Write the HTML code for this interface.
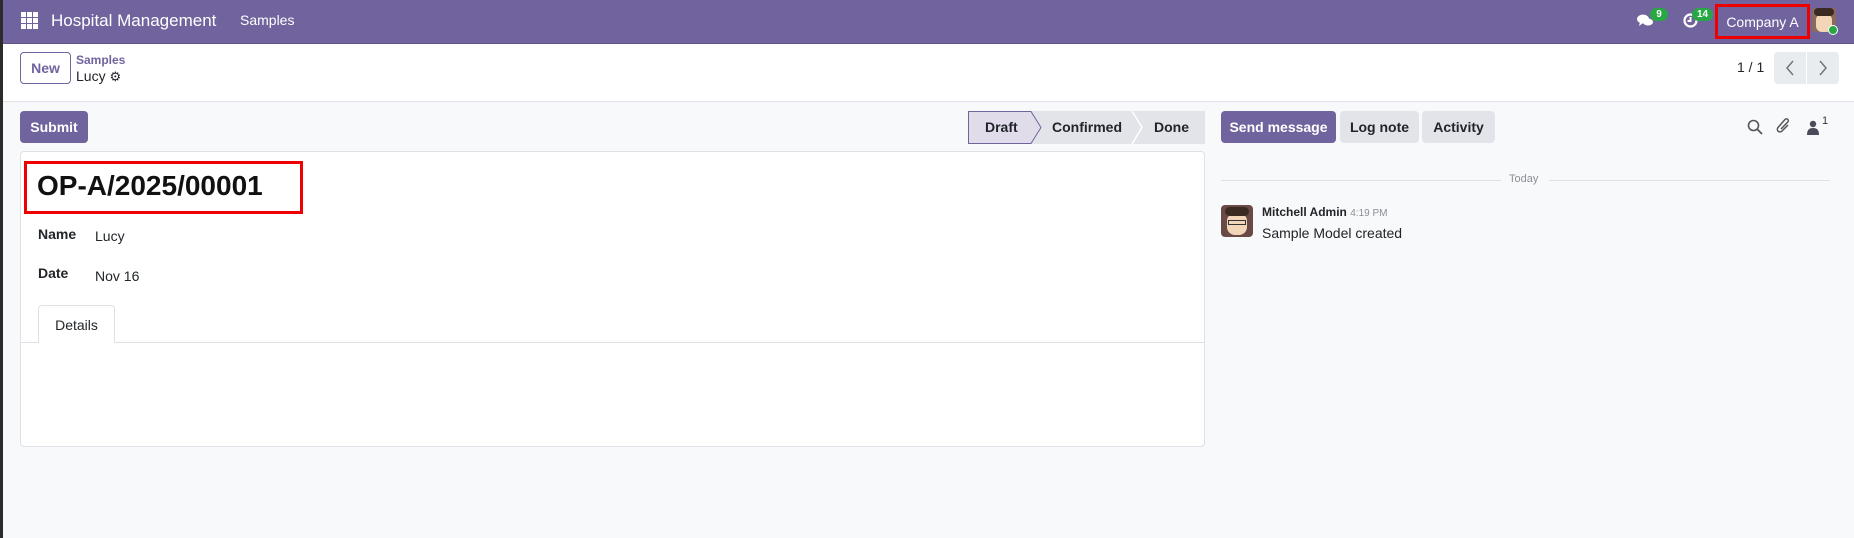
<!DOCTYPE html>
<html><head><meta charset="utf-8"><style>
*{box-sizing:border-box;margin:0;padding:0}
body{width:1854px;height:538px;overflow:hidden;background:#f8f9fa;font-family:"Liberation Sans",sans-serif;color:#212529;position:relative;font-size:14px}
.abs{position:absolute}
.nav{left:0;top:0;width:1854px;height:44px;background:#71639e;border-bottom:1px solid #5f5386}
.cp{left:0;top:44px;width:1854px;height:58px;background:#fff;border-bottom:1px solid #dee2e6}
.btn{position:absolute;border-radius:4px;font-weight:bold;font-size:14px;display:flex;align-items:center;justify-content:center}
.badge{position:absolute;background:#28a745;color:#fff;font-size:10px;font-weight:bold;border-radius:8px;height:13px;display:flex;align-items:center;justify-content:center;padding:0 3px}
</style></head><body>
<div class="abs" style="left:0;top:0;width:3px;height:538px;background:#2b2b2b;z-index:9"></div>
<div class="abs nav"></div>
<svg class="abs" style="left:21px;top:12px" width="17" height="17" viewBox="0 0 17 17" fill="#fff"><rect x="0" y="0" width="5" height="5"/><rect x="6" y="0" width="5" height="5"/><rect x="12" y="0" width="5" height="5"/><rect x="0" y="6" width="5" height="5"/><rect x="6" y="6" width="5" height="5"/><rect x="12" y="6" width="5" height="5"/><rect x="0" y="12" width="5" height="5"/><rect x="6" y="12" width="5" height="5"/><rect x="12" y="12" width="5" height="5"/></svg>
<div class="abs" style="left:51px;top:11px;color:#fff;font-size:17px">Hospital Management</div>
<div class="abs" style="left:240px;top:12px;color:#fff;font-size:14px">Samples</div>
<svg class="abs" style="left:1637px;top:13px" width="16" height="15" viewBox="0 0 16 15" fill="#fff"><ellipse cx="6" cy="6" rx="6" ry="4.5"/><path d="M3 9 L2 13 L6 10Z"/><ellipse cx="11" cy="9" rx="5" ry="3.5"/></svg>
<div class="badge" style="left:1650px;top:8px;width:18px">9</div>
<svg class="abs" style="left:1683px;top:13px" width="15" height="15" viewBox="0 0 15 15"><circle cx="7.5" cy="7.5" r="6" fill="none" stroke="#fff" stroke-width="2.2"/><path d="M7.5 4v4h-3" fill="none" stroke="#fff" stroke-width="2"/></svg>
<div class="badge" style="left:1692px;top:8px;width:21px">14</div>
<div class="abs" style="left:1715px;top:4px;width:95px;height:35px;border:3px solid #e00;color:#fff;font-size:14px;display:flex;align-items:center;justify-content:center">Company A</div>
<div class="abs" style="left:1812px;top:8px;width:24px;height:24px;background:#8a6a5a;border-radius:3px;overflow:hidden"><div style="position:absolute;left:4px;top:6px;width:16px;height:18px;background:#f3d6b8;border-radius:6px"></div><div style="position:absolute;left:2px;top:0;width:20px;height:8px;background:#3a2a22;border-radius:4px"></div></div>
<div class="abs" style="left:1828px;top:25px;width:10px;height:10px;border-radius:50%;background:#28a745;border:1px solid #fff"></div>

<div class="abs cp"></div>
<div class="abs" style="left:20px;top:52px;width:51px;height:32px;border:1px solid #71639e;border-radius:4px;background:#fff;color:#71639e;font-weight:bold;font-size:14px;display:flex;align-items:center;justify-content:center">New</div>
<div class="abs" style="left:76px;top:53px;color:#71639e;font-weight:bold;font-size:12px">Samples</div>
<div class="abs" style="left:76px;top:68px;font-size:14px">Lucy <span style="font-size:13px">⚙</span></div>
<div class="abs" style="left:1737px;top:59px;font-size:14px">1 / 1</div>
<div class="abs" style="left:1774px;top:52px;width:65px;height:32px;background:#e9ecef;border-radius:4px"></div>
<div class="abs" style="left:1806px;top:52px;width:1px;height:32px;background:#fff"></div>
<svg class="abs" style="left:1785px;top:60px" width="10" height="16" viewBox="0 0 10 16"><path d="M8 1L2 8l6 7" fill="none" stroke="#6c757d" stroke-width="1.5"/></svg>
<svg class="abs" style="left:1818px;top:60px" width="10" height="16" viewBox="0 0 10 16"><path d="M2 1l6 7-6 7" fill="none" stroke="#6c757d" stroke-width="1.5"/></svg>

<div class="btn" style="left:20px;top:111px;width:68px;height:32px;background:#71639e;color:#fff">Submit</div>
<svg class="abs" style="left:968px;top:111px" width="237" height="33" viewBox="0 0 237 33">
<rect x="0" y="0" width="237" height="33" fill="#e2e4e9"/>
<path d="M0.5 0.5H63L73 16.5L63 32.5H0.5Z" fill="#e0dcea" stroke="#71639e"/>
<path d="M164 0L174 16.5L164 33" fill="none" stroke="#fff" stroke-width="1.5"/>
</svg>
<div class="abs" style="left:985px;top:119px;font-weight:bold;font-size:14px">Draft</div>
<div class="abs" style="left:1052px;top:119px;font-weight:bold;font-size:14px">Confirmed</div>
<div class="abs" style="left:1154px;top:119px;font-weight:bold;font-size:14px">Done</div>

<div class="abs" style="left:20px;top:151px;width:1185px;height:296px;background:#fff;border:1px solid #dee2e6;border-radius:4px"></div>
<div class="abs" style="left:24px;top:161px;width:279px;height:53px;border:3px solid #e00"></div>
<div class="abs" style="left:37px;top:170px;font-size:28px;font-weight:bold;color:#111">OP-A/2025/00001</div>
<div class="abs" style="left:38px;top:226px;font-weight:bold;font-size:14px">Name</div>
<div class="abs" style="left:95px;top:228px;font-size:14px">Lucy</div>
<div class="abs" style="left:38px;top:265px;font-weight:bold;font-size:14px">Date</div>
<div class="abs" style="left:95px;top:268px;font-size:14px">Nov 16</div>
<div class="abs" style="left:21px;top:342px;width:1183px;height:1px;background:#dee2e6"></div>
<div class="abs" style="left:38px;top:305px;width:77px;height:38px;background:#fff;border:1px solid #dee2e6;border-bottom:none;border-radius:4px 4px 0 0;display:flex;align-items:center;justify-content:center;font-size:14px">Details</div>

<div class="btn" style="left:1221px;top:111px;width:115px;height:32px;background:#71639e;color:#fff">Send message</div>
<div class="btn" style="left:1340px;top:111px;width:79px;height:32px;background:#e2e4e9;color:#212529">Log note</div>
<div class="btn" style="left:1422px;top:111px;width:73px;height:32px;background:#e2e4e9;color:#212529">Activity</div>
<svg class="abs" style="left:1747px;top:119px" width="16" height="16" viewBox="0 0 16 16"><circle cx="6.5" cy="6.5" r="5" fill="none" stroke="#555" stroke-width="1.6"/><path d="M10 10l5 5" stroke="#555" stroke-width="1.8"/></svg>
<svg class="abs" style="left:1776px;top:117px" width="16" height="19" viewBox="0 0 16 19"><path d="M12 8L6 14a2.5 2.5 0 01-4-3.5l7-8a1.8 1.8 0 012.8 2.5L5 12" fill="none" stroke="#555" stroke-width="1.5"/></svg>
<svg class="abs" style="left:1807px;top:120px" width="12" height="15" viewBox="0 0 12 15" fill="#4a4a5a"><circle cx="6" cy="4" r="3.2"/><path d="M0 15c0-5 2-7 6-7s6 2 6 7z"/></svg>
<div class="abs" style="left:1822px;top:115px;font-size:11px;color:#333">1</div>

<div class="abs" style="left:1221px;top:180px;width:280px;height:1px;background:#dee2e6"></div>
<div class="abs" style="left:1549px;top:180px;width:281px;height:1px;background:#dee2e6"></div>
<div class="abs" style="left:1509px;top:173px;font-size:11px;color:#8a8f96">Today</div>
<div class="abs" style="left:1221px;top:205px;width:32px;height:32px;background:#6a4a46;border-radius:4px;overflow:hidden"><div style="position:absolute;left:6px;top:8px;width:20px;height:22px;background:#f3d6b8;border-radius:8px"></div><div style="position:absolute;left:4px;top:2px;width:24px;height:9px;background:#3a2a22;border-radius:5px"></div><div style="position:absolute;left:7px;top:15px;width:18px;height:5px;border:1.5px solid #333"></div></div>
<div class="abs" style="left:1262px;top:205px;font-size:12px;font-weight:bold">Mitchell Admin <span style="font-weight:normal;font-size:10px;color:#8a8f96">4:19 PM</span></div>
<div class="abs" style="left:1262px;top:225px;font-size:14px">Sample Model created</div>
</body></html>
